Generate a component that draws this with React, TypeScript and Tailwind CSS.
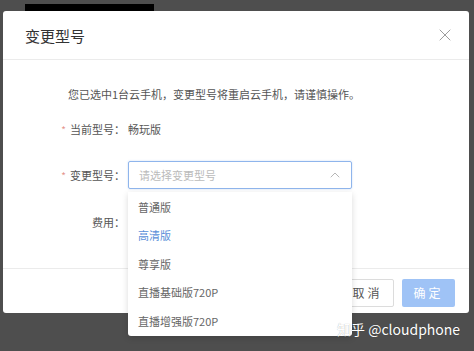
import { X, ChevronUp } from 'lucide-react'

const options = ['普通版', '高清版', '尊享版', '直播基础版720P', '直播增强版720P']
const active = '高清版'

export default function App() {
  return (
    <div className="relative h-[351px] w-[474px] overflow-hidden bg-[#4e4e4e] px-[3px] pt-[11px] font-['Noto_Sans_CJK_SC','Noto_Sans',sans-serif]">
      {/* page content peeking out behind the overlay */}
      <div className="absolute left-[25px] top-[4px] h-[7px] w-[129px] bg-black" />

      <div className="relative w-[466px] rounded-[3px] bg-white">
        <div className="flex h-[49px] items-center justify-between border-b border-[#ebebeb] pl-[22px] pr-[14px]">
          <h2 className="text-[15px] leading-none text-[#333]">变更型号</h2>
          <X className="h-[20px] w-[20px] text-[#888]" strokeWidth={1} />
        </div>

        <div className="h-[208px] pt-[27px]">
          <p className="pl-[65px] text-[11px] leading-[14px] text-[#555]">
            您已选中1台云手机，变更型号将重启云手机，请谨慎操作。
          </p>

          <div className="mt-[21px] flex h-[14px] items-center text-[11px] text-[#555]">
            <Label required>当前型号</Label>
            <span>畅玩版</span>
          </div>

          <div className="mt-[25px] flex items-center text-[11px]">
            <Label required>变更型号</Label>
            <div className="flex h-[28px] w-[224px] items-center justify-between rounded-[2px] border border-[#8fb5ec] pl-[10px] pr-[8px] shadow-[0_0_2px_rgba(90,145,225,0.35)]">
              <span className="text-[#bbb]">请选择变更型号</span>
              <ChevronUp className="h-[16px] w-[16px] text-[#aaa]" strokeWidth={1.3} />
            </div>
          </div>

          <div className="mt-[26px] flex h-[14px] items-center text-[11px] text-[#555]">
            <Label>费用</Label>
          </div>
        </div>

        <div className="flex h-[45px] items-start justify-end gap-[8px] border-t border-[#ebebeb] pr-[14px] pt-[10px]">
          <button className="h-[28px] w-[53px] rounded-[2px] border border-[#dcdcdc] bg-white text-[12px] tracking-[3px] text-[#555]">
            取消
          </button>
          <button className="h-[28px] w-[53px] rounded-[2px] bg-[#9fc3f6] text-[12px] tracking-[3px] text-white">
            确定
          </button>
        </div>

        {/* open select menu */}
        <ul className="absolute left-[125px] top-[181px] w-[224px] rounded-b-[3px] bg-white py-[0.5px] shadow-[0_2px_6px_rgba(0,0,0,0.15)]">
          {options.map((o) => (
            <li
              key={o}
              className={
                'flex h-[28.5px] items-center pl-[10px] text-[11px] ' +
                (o === active ? 'text-[#5a8fd9]' : 'text-[#666]')
              }
            >
              {o}
            </li>
          ))}
        </ul>
      </div>

      <div className="absolute left-[337px] top-[318px] text-[14px] leading-[22px] text-white [text-shadow:0_0_1px_rgba(0,0,0,0.35)]">
        知乎 @cloudphone
      </div>
    </div>
  )
}

function Label({ children, required }: { children: React.ReactNode; required?: boolean }) {
  return (
    <div className="mr-[3px] flex w-[122px] items-center justify-end text-[#555]">
      {required && <span className="mr-[4px] text-[10px] text-[#e5958f]">*</span>}
      <span>{children}：</span>
    </div>
  )
}
